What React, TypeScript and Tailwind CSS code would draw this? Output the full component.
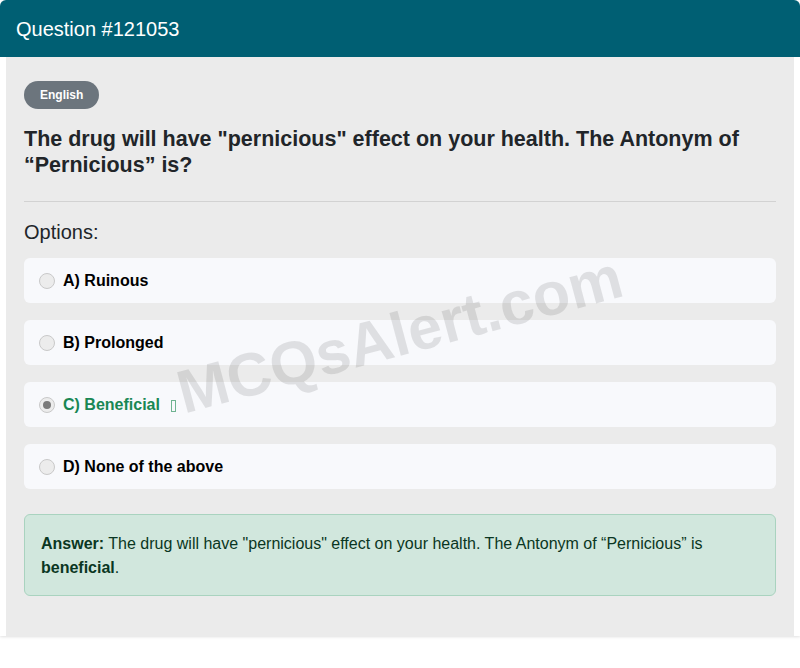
import React from "react";

const options = [
  { key: "A", label: "Ruinous" },
  { key: "B", label: "Prolonged" },
  { key: "C", label: "Beneficial", correct: true },
  { key: "D", label: "None of the above" },
];

function Radio({ checked }: { checked?: boolean }) {
  return (
    <span className="w-4 h-4 rounded-full border border-[#c9c9c9] bg-[#ececec] flex items-center justify-center shrink-0">
      {checked && <span className="w-2 h-2 rounded-full bg-[#7a7a7a]" />}
    </span>
  );
}

export default function App() {
  return (
    <div className="w-[800px] h-[668px] bg-white font-['Liberation_Sans',Arial,sans-serif]">
      <div className="relative shadow-[0_1px_3px_rgba(0,0,0,0.12)] rounded-t-md">
        {/* Header */}
        <div className="h-[57px] bg-[#005f73] rounded-t-md flex items-center px-4">
          <h1 className="text-white text-[20px]">Question #121053</h1>
        </div>

        {/* Body */}
        <div className="mx-[6px] bg-[#ebebeb] px-[18px] pt-6 pb-[40px]">
          <span className="inline-flex items-center h-[28px] px-4 rounded-full bg-[#6c757d] text-white text-[12px] font-bold">
            English
          </span>

          <h2 className="mt-[17px] text-[21.5px] leading-[26px] font-bold text-[#212529]">
            The drug will have "pernicious" effect on your health. The Antonym of “Pernicious” is?
          </h2>

          <hr className="mt-[23px] border-0 h-px bg-[#d2d2d2]" />

          <p className="mt-[15px] text-[20px] text-[#212529]">Options:</p>

          <div className="mt-[11px] flex flex-col gap-[17px]">
            {options.map((o) => (
              <div
                key={o.key}
                className="h-[45px] rounded-md bg-[#f8f9fc] flex items-center gap-2 px-[15px]"
              >
                <Radio checked={o.correct} />
                <span
                  className={
                    o.correct
                      ? "text-[16px] font-bold text-[#198754]"
                      : "text-[16px] font-bold text-black"
                  }
                >
                  {o.key}) {o.label}
                </span>
                {o.correct && (
                  <span className="ml-[3px] mt-[3px] w-[5px] h-[12px] border border-[#6fb391]" />
                )}
              </div>
            ))}
          </div>

          <div className="mt-[25px] rounded-md border border-[#a9d3bf] bg-[#d1e7dd] px-4 pt-[17px] pb-[15px] text-[16px] leading-[24px] text-[#0a3622]">
            <b>Answer:</b> The drug will have "pernicious" effect on your health. The Antonym of “Pernicious” is{" "}
            <b>beneficial</b>.
          </div>
        </div>

        {/* Watermark */}
        <div className="absolute left-0 right-0 top-[335px] flex justify-center pointer-events-none">
          <span className="-translate-y-1/2 -rotate-[15deg] text-[61px] font-bold text-black/10 whitespace-nowrap">
            MCQsAlert.com
          </span>
        </div>
      </div>
    </div>
  );
}
